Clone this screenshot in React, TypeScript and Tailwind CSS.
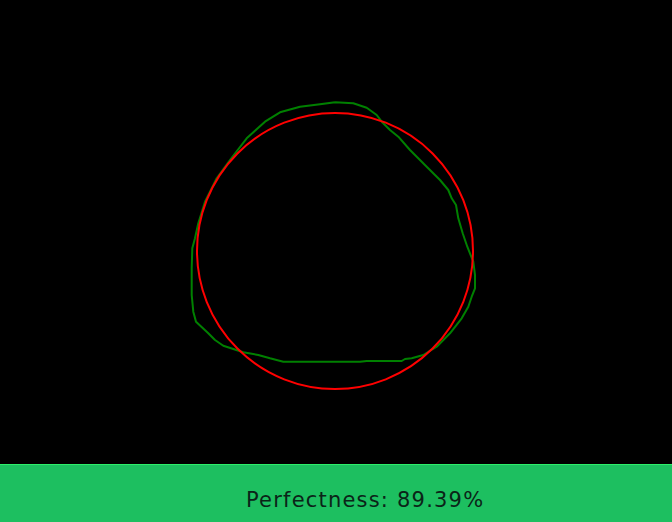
const stroke: [number, number][] = [
  [335, 102.3], [353.3, 103.3], [366.7, 107.7], [376.7, 115], [381.7, 121.7],
  [390, 130], [398.3, 136.7], [410, 150], [426.7, 166.7], [440, 180],
  [448.3, 190], [451.7, 198.3], [456, 205], [458.3, 218.3], [462.7, 233.3],
  [467.3, 246.7], [473.3, 261.7], [475, 275], [475, 288.3], [471.7, 296.7],
  [468.3, 306.7], [461.7, 318.3], [450, 333.3], [436.7, 346.7], [423.3, 355],
  [411.7, 358.3], [405, 359], [401.7, 361], [366.7, 361], [360, 361.7],
  [283.3, 361.7], [270, 358.3], [258.3, 355], [243.3, 352.3], [223.3, 345.7],
  [215, 340], [208.3, 333.3], [196, 321.7], [193.3, 311.7], [191.7, 295],
  [191.7, 268.3], [192.3, 248.3], [195, 238.3], [198.3, 223.3], [205, 201.7],
  [216.7, 178.3], [230, 160], [246.7, 138.3], [265, 121.7], [280, 112.3],
  [300, 106.7], [320, 104.3], [335, 102.3],
];

export default function App() {
  const points = stroke.map(([x, y]) => `${x},${y}`).join(" ");

  return (
    <div className="flex h-[522px] w-[672px] flex-col bg-black">
      <div className="h-[464px] w-full">
        <svg width="672" height="464" viewBox="0 0 672 464">
          <polyline
            points={points}
            fill="none"
            stroke="#008000"
            strokeWidth="2"
            strokeLinejoin="round"
          />
          <circle cx="335" cy="251" r="138" fill="none" stroke="#ff0000" strokeWidth="2" />
        </svg>
      </div>
      <div className="flex flex-1 items-center border-t border-[#2cf06a] bg-[#1dbf60] pl-[246px] pt-[15px]">
        <span className="font-['DejaVu_Sans',sans-serif] text-[21px] tracking-[1.2px] text-[#0b2418]">
          Perfectness: 89.39%
        </span>
      </div>
    </div>
  );
}
